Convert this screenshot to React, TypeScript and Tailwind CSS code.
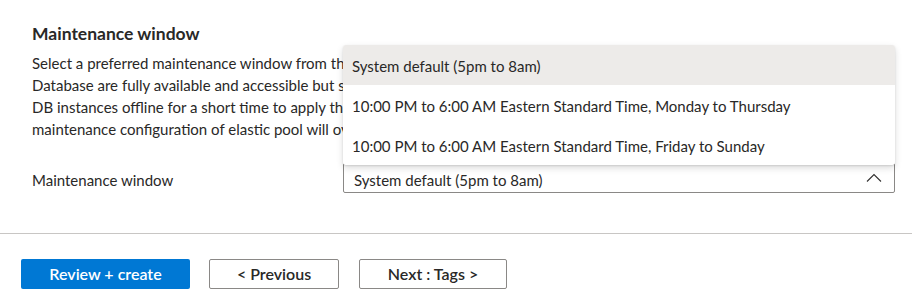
import React, { useState } from "react";

const options = [
  "System default (5pm to 8am)",
  "10:00 PM to 6:00 AM Eastern Standard Time, Monday to Thursday",
  "10:00 PM to 6:00 AM Eastern Standard Time, Friday to Sunday",
];

const description = [
  "Select a preferred maintenance window from the list of available options. While the databases in Azure SQL",
  "Database are fully available and accessible but some of the maintenance updates require a failover as Azure takes SQL",
  "DB instances offline for a short time to apply the maintenance updates. When a database is added to an elastic pool,",
  "maintenance configuration of elastic pool will override the configuration of the database.",
];

function ChevronUp() {
  return (
    <svg width="16" height="9" viewBox="0 0 16 9" className="shrink-0">
      <path d="M1 8.5 L8 1.5 L15 8.5" fill="none" stroke="#323130" strokeWidth="1.1" />
    </svg>
  );
}

export default function App() {
  const [selected] = useState(0);

  return (
    <div
      className="w-[912px] h-[301px] bg-white text-[#292827] overflow-hidden"
      style={{ fontFamily: "Lato, 'Open Sans', sans-serif" }}
    >
      <div className="pl-8 pr-[17px] pt-[22px]">
        <h2 className="text-[17.5px] leading-[24px] font-bold">Maintenance window</h2>
        {/* the open list covers the rest of each line */}
        <div className="mt-[6px] w-[311px] overflow-hidden text-[15px] leading-[22px]">
          {description.map((line) => (
            <p key={line} className="whitespace-nowrap">
              {line}
            </p>
          ))}
        </div>

        <div className="mt-[23px] flex items-start">
          <div className="w-[311px] shrink-0 pt-[6px] text-[15px] leading-[22px]">Maintenance window</div>
          <div className="relative flex-1">
            <div className="box-border h-[30px] border border-[#8a8886] rounded-[2px] flex items-start justify-between pl-[10px] pr-[12px]">
              <span className="pt-[5px] text-[15px] leading-[22px]">{options[selected]}</span>
              <span className="pt-[9px]">
                <ChevronUp />
              </span>
            </div>

            <ul className="absolute left-0 right-0 bottom-[28px] bg-white rounded-[3px] overflow-hidden shadow-[0_3px_7px_rgba(0,0,0,0.14),0_1px_2px_rgba(0,0,0,0.11)]">
              {options.map((opt, i) => (
                <li
                  key={opt}
                  className={
                    i === selected
                      ? "h-[40px] pt-[2px] pl-[9px] leading-[38px] text-[15px] bg-[#edebe9]"
                      : "h-[40px] pt-[2px] pl-[9px] leading-[38px] text-[15px]"
                  }
                >
                  {opt}
                </li>
              ))}
            </ul>
          </div>
        </div>
      </div>

      <div className="mt-[40px] h-px bg-[#c8c6c4]" />

      <div className="mt-[25px] pl-[21px] flex gap-[19px] text-[16px]">
        <button className="w-[169px] h-[30px] rounded-[2px] bg-[#0078d4] text-white font-semibold">
          Review + create
        </button>
        <button className="w-[130px] h-[30px] rounded-[2px] border border-[#8a8886] bg-white font-semibold">
          &lt; Previous
        </button>
        <button className="ml-px w-[148px] h-[30px] rounded-[2px] border border-[#8a8886] bg-white font-semibold">
          Next : Tags &gt;
        </button>
      </div>
    </div>
  );
}
